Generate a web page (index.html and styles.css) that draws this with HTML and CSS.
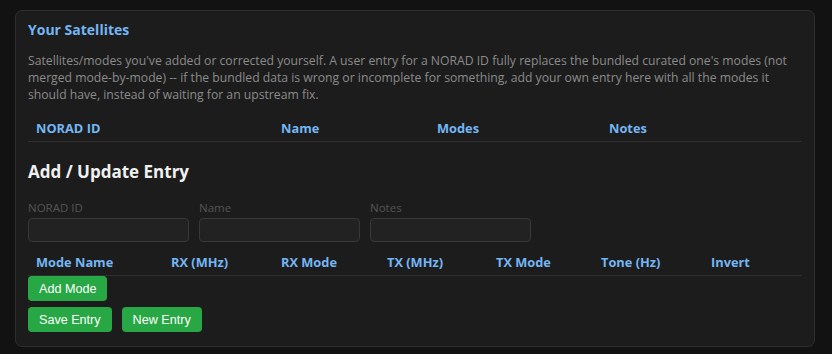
FILE: index.html
```html
<!DOCTYPE html>
<html lang="en">
<head>
<meta charset="utf-8">
<title>Your Satellites</title>
<link rel="stylesheet" href="styles.css">
</head>
<body>
<main class="page">
  <section class="panel">
    <h2 class="title">Your Satellites</h2>
    <p class="desc">Satellites/modes you've added or corrected yourself. A user entry for a NORAD ID fully replaces the bundled curated one's modes (not merged mode-by-mode) -- if the bundled data is wrong or incomplete for something, add your own entry here with all the modes it should have, instead of waiting for an upstream fix.</p>
    <table class="tbl sat-tbl">
      <colgroup>
        <col class="c-norad"><col class="c-name"><col class="c-modes"><col class="c-notes">
      </colgroup>
      <thead>
        <tr><th>NORAD ID</th><th>Name</th><th>Modes</th><th>Notes</th></tr>
      </thead>
      <tbody></tbody>
    </table>

    <h3 class="subtitle">Add / Update Entry</h3>
    <div class="fields">
      <label class="field"><span class="lbl">NORAD ID</span><input class="inp" type="text"></label>
      <label class="field"><span class="lbl">Name</span><input class="inp" type="text"></label>
      <label class="field"><span class="lbl">Notes</span><input class="inp" type="text"></label>
    </div>

    <table class="tbl mode-tbl">
      <colgroup>
        <col class="m1"><col class="m2"><col class="m3"><col class="m4"><col class="m5"><col class="m6"><col class="m7">
      </colgroup>
      <thead>
        <tr><th>Mode Name</th><th>RX (MHz)</th><th>RX Mode</th><th>TX (MHz)</th><th>TX Mode</th><th>Tone (Hz)</th><th>Invert</th></tr>
      </thead>
      <tbody></tbody>
    </table>
    <div class="row"><button class="btn">Add Mode</button></div>
    <div class="row actions"><button class="btn">Save Entry</button><button class="btn">New Entry</button></div>
  </section>
</main>
</body>
</html>
```
FILE: styles.css
```css
html, body {
  margin: 0;
  padding: 0;
  background: #121212;
}
body {
  font-family: "Open Sans", "Noto Sans", sans-serif;
  width: 832px;
  height: 354px;
  overflow: hidden;
}
.page {
  padding: 10px 0 0 15px;
}
.panel {
  box-sizing: border-box;
  width: 800px;
  background: #1c1c1c;
  border: 1px solid #2e2e2e;
  border-radius: 7px;
  padding: 9px 12px 14px;
}
.title {
  margin: 0;
  font-size: 14px;
  line-height: 20px;
  font-weight: 700;
  color: #74b6f4;
}
.desc {
  margin: 12px 0 9px;
  font-size: 12.2px;
  line-height: 17px;
  color: #8b8b8b;
}
.tbl {
  width: 100%;
  border-collapse: collapse;
  table-layout: fixed;
}
.tbl th {
  text-align: left;
  font-size: 12.8px;
  line-height: 17px;
  font-weight: 700;
  color: #74b6f4;
  padding: 8px 8px 4px;
  border-bottom: 1px solid #2f2f2f;
}
.c-norad { width: 245px; }
.c-name { width: 156px; }
.c-modes { width: 172px; }
.c-notes { width: 201px; }
.m1 { width: 135px; }
.m2 { width: 110px; }
.m3 { width: 106px; }
.m4 { width: 109px; }
.m5 { width: 105px; }
.m6 { width: 110px; }
.m7 { width: 99px; }

.subtitle {
  margin: 18px 0 16px;
  font-size: 17px;
  line-height: 24px;
  font-weight: 700;
  color: #f0f0f0;
}
.fields {
  display: flex;
  gap: 10px;
}
.field {
  display: flex;
  flex-direction: column;
  width: 161px;
}
.lbl {
  font-size: 11.5px;
  line-height: 16px;
  color: #555555;
  margin-bottom: 2px;
}
.inp {
  box-sizing: border-box;
  width: 161px;
  height: 24px;
  background: #222222;
  border: 1px solid #383838;
  border-radius: 4px;
  margin: 0;
  padding: 0 6px;
  color: #ddd;
}
.mode-tbl {
  margin-top: 4px;
}
.row {
  display: flex;
  gap: 10px;
}
.actions {
  margin-top: 6px;
}
.btn {
  height: 25px;
  padding: 0 11px;
  margin: 0;
  border: none;
  border-radius: 4px;
  background: #28a745;
  color: #ffffff;
  font-family: "Liberation Sans", Arial, sans-serif;
  font-size: 12.6px;
}
```
